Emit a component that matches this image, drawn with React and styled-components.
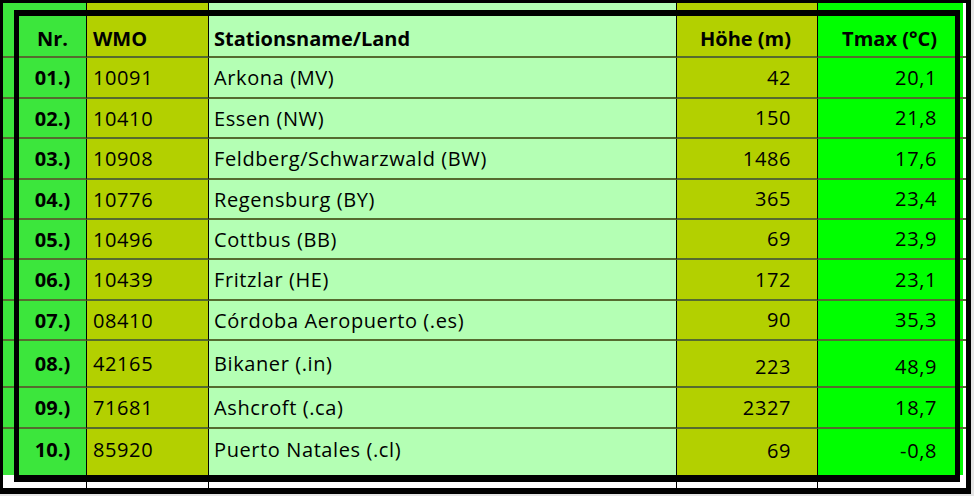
import React from 'react'
import styled, { createGlobalStyle } from 'styled-components'

const GlobalStyle = createGlobalStyle`
  body {
    margin: 0;
    background: #e6e6e6;
    font-family: "Open Sans", "Liberation Sans", sans-serif;
  }
`

// column fills as they are in the sheet
const tones = {
  nr: '#3ce63c',
  wmo: '#b3d000',
  name: '#b4ffb4',
  hoehe: '#b3d000',
  tmax: '#00ff00',
  blank: '#ffffff',
}

const columns = '16px 67px 122px 468px 141px 146px 3px'

const stations = [
  ['01.)', '10091', 'Arkona (MV)', '42', '20,1', 41],
  ['02.)', '10410', 'Essen (NW)', '150', '21,8', 40],
  ['03.)', '10908', 'Feldberg/Schwarzwald (BW)', '1486', '17,6', 41],
  ['04.)', '10776', 'Regensburg (BY)', '365', '23,4', 40],
  ['05.)', '10496', 'Cottbus (BB)', '69', '23,9', 40],
  ['06.)', '10439', 'Fritzlar (HE)', '172', '23,1', 41],
  ['07.)', '08410', 'Córdoba Aeropuerto (.es)', '90', '35,3', 40],
  ['08.)', '42165', 'Bikaner (.in)', '223', '48,9', 47],
  ['09.)', '71681', 'Ashcroft (.ca)', '2327', '18,7', 41],
  ['10.)', '85920', 'Puerto Natales (.cl)', '69', '-0,8', 41],
]

export default function App() {
  return (
    <>
      <GlobalStyle />
      <Frame>
        <Sheet>
          <Row $height={13}>
            <Cell $tone="nr" />
            <Cell $tone="nr" />
            <Cell $tone="wmo" $rule />
            <Cell $tone="name" $rule />
            <Cell $tone="hoehe" $rule />
            <Cell $tone="tmax" $rule />
            <Cell $tone="blank" />
          </Row>

          <Row $height={42}>
            <Cell $tone="nr" $line />
            <Cell $tone="nr" $line $bold $align="center" $pad="0 0 5px">Nr.</Cell>
            <Cell $tone="wmo" $line $rule $bold $pad="0 0 5px 6px">WMO</Cell>
            <Cell $tone="name" $line $rule $bold $pad="0 0 5px 5px">Stationsname/Land</Cell>
            <Cell $tone="hoehe" $line $rule $bold $align="right" $pad="0 26px 5px 0">Höhe (m)</Cell>
            <Cell $tone="tmax" $line $rule $bold $align="right" $pad="0 26px 5px 0">Tmax (°C)</Cell>
            <Cell $tone="blank" $line />
          </Row>

          {stations.map(([nr, wmo, name, hoehe, tmax, height], idx) => {
            let line = idx < stations.length - 1
            return (
              <Row key={nr} $height={height}>
                <Cell $tone="nr" $line={line} />
                <Cell $tone="nr" $line={line} $bold $align="center" $middle $pad="1px 0 0">{nr}</Cell>
                <Cell $tone="wmo" $line={line} $rule $middle $pad="1px 0 0 6px">{wmo}</Cell>
                <Cell $tone="name" $line={line} $rule $middle $pad="1px 0 0 5px">{name}</Cell>
                <Cell $tone="hoehe" $line={line} $rule $align="right" $pad="0 26px 7px 0">{hoehe}</Cell>
                <Cell $tone="tmax" $line={line} $rule $align="right" $pad="0 26px 7px 0">{tmax}</Cell>
                <Cell $tone="blank" $line={line} />
              </Row>
            )
          })}

          <Row $height={5}>
            <Cell $tone="nr" />
            <Cell $tone="nr" />
            <Cell $tone="wmo" $rule />
            <Cell $tone="name" $rule />
            <Cell $tone="hoehe" $rule />
            <Cell $tone="tmax" $rule />
            <Cell $tone="blank" />
          </Row>

          <Row $height={13}>
            <Cell $tone="blank" />
            <Cell $tone="blank" />
            <Cell $tone="blank" $rule />
            <Cell $tone="blank" $rule />
            <Cell $tone="blank" $rule />
            <Cell $tone="blank" $rule />
            <Cell $tone="blank" />
          </Row>
        </Sheet>

        {/* thick outline drawn over the cells, like a sheet border */}
        <Outline />
      </Frame>
    </>
  )
}

const Frame = styled.div`
  position: relative;
  width: 963px;
  height: 485px;
  border-style: solid;
  border-color: #000;
  border-width: 3px 5px 6px 3px;
  background: #fff;
`

const Sheet = styled.div`
  display: flex;
  flex-direction: column;
`

const Row = styled.div`
  display: grid;
  grid-template-columns: ${columns};
  height: ${p => p.$height}px;
`

const Cell = styled.div`
  box-sizing: border-box;
  display: flex;
  align-items: ${p => (p.$middle ? 'center' : 'flex-end')};
  justify-content: ${p =>
    p.$align === 'center' ? 'center' : p.$align === 'right' ? 'flex-end' : 'flex-start'};
  padding: ${p => p.$pad || '0'};
  background: ${p => tones[p.$tone]};
  border-left: ${p => (p.$rule ? '1px solid #000' : 'none')};
  border-bottom: ${p => (p.$line ? '2px solid #556b2f' : 'none')};
  font-size: 20px;
  line-height: 24px;
  font-weight: ${p => (p.$bold ? 700 : 400)};
  letter-spacing: ${p => (p.$bold ? '0' : '0.6px')};
  color: #000;
  white-space: nowrap;
`

const Outline = styled.div`
  position: absolute;
  left: 11px;
  top: 7px;
  width: 946px;
  height: 472px;
  box-sizing: border-box;
  border-style: solid;
  border-color: #000;
  border-width: 6px 5px 7px 5px;
  pointer-events: none;
`
